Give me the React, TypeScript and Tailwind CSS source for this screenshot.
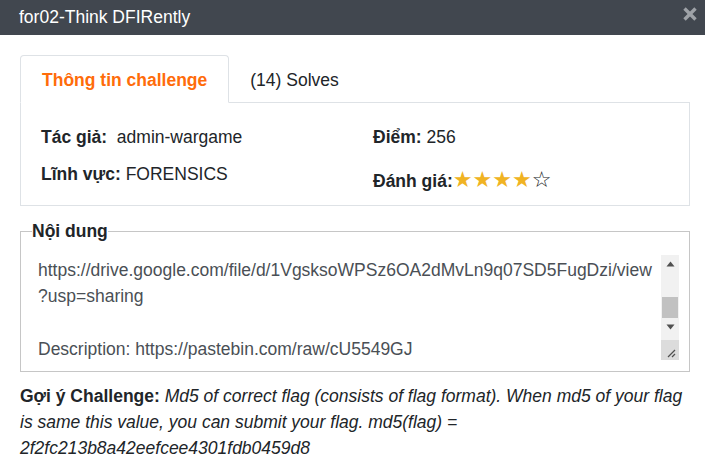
import React from "react";

function Scrollbar() {
  return (
    <div className="flex w-[18px] shrink-0 flex-col bg-[#f1f1f1]">
      <div className="flex h-[18px] items-center justify-center">
        <svg width="9" height="6" viewBox="0 0 9 6">
          <polygon points="4.5,0.5 8.5,5.5 0.5,5.5" fill="#505050" />
        </svg>
      </div>
      <div className="h-[24px]" />
      <div className="mx-[1px] h-[21px] bg-[#c1c1c1]" />
      <div className="flex h-[18px] items-center justify-center">
        <svg width="9" height="6" viewBox="0 0 9 6">
          <polygon points="0.5,0.5 8.5,0.5 4.5,5.5" fill="#505050" />
        </svg>
      </div>
      <div className="flex-1" />
      <div className="relative h-[20px] bg-[#dcdcdc]">
        <svg className="absolute bottom-[2px] right-[3px]" width="10" height="10" viewBox="0 0 10 10">
          <line x1="9" y1="2" x2="2" y2="9" stroke="#505050" strokeWidth="1.2" />
          <line x1="9" y1="6" x2="6" y2="9" stroke="#505050" strokeWidth="1.2" />
        </svg>
      </div>
    </div>
  );
}

export default function App() {
  const font = { fontFamily: '"Liberation Sans", Arial, sans-serif' };
  return (
    <div className="h-[476px] w-[705px] overflow-hidden bg-white text-[17.5px] leading-[26.4px] text-[#212529]" style={font}>
      <div className="relative flex h-[35px] items-center bg-[#41474f] pl-[19px] text-[17.5px] text-white">
        <span>for02-Think DFIRently</span>
        <svg className="absolute left-[683px] top-[7px]" width="14" height="14" viewBox="0 0 14 14">
          <line x1="1.5" y1="1.5" x2="12.5" y2="12.5" stroke="#9ea2a7" strokeWidth="3.4" />
          <line x1="12.5" y1="1.5" x2="1.5" y2="12.5" stroke="#9ea2a7" strokeWidth="3.4" />
        </svg>
      </div>

      <div className="ml-[20px] mt-[20px] w-[670px]">
        <div className="flex border-b border-[#dee2e6]">
          <div className="-mb-px rounded-t-[4px] border border-[#dee2e6] border-b-white bg-white px-[21px] pb-[9px] pt-[11px] font-bold text-[#ff6c0a]">
            Thông tin challenge
          </div>
          <div className="px-[21px] pb-[9px] pt-[12px] text-[#212529]">(14) Solves</div>
        </div>
        <div className="grid grid-cols-[332px_1fr] border-x border-b border-[#dee2e6] pb-[11px] pl-[20px] pt-[21px]">
          <div className="flex items-baseline">
            <span className="font-bold">Tác giả:</span>
            <span>{"\u00a0 admin-wargame"}</span>
          </div>
          <div className="flex items-baseline">
            <span className="font-bold">Điểm:</span>
            <span>{"\u00a0256"}</span>
          </div>
          <div className="mt-[10px] flex items-baseline">
            <span className="font-bold">Lĩnh vực:</span>
            <span>{"\u00a0FORENSICS"}</span>
          </div>
          <div className="mt-[16px] flex items-baseline">
            <span className="font-bold">Đánh giá:</span>
            <span className="text-[22px] leading-[1.2] text-[#f0b323]" style={{ fontFamily: '"DejaVu Sans", sans-serif' }}>
              ★★★★<span className="text-[#212529]">☆</span>
            </span>
          </div>
        </div>

        <fieldset className="mt-[12px] border border-[#c6c6c6] px-[10px] pb-[11px]">
          <legend className="ml-[1px] font-bold">Nội dung</legend>
          <div className="mt-[10px] flex h-[105px]">
            <div className="flex-1 overflow-hidden pl-[7px] pt-[2px] text-[#4a4f55]">
              <div>https://drive.google.com/file/d/1VgsksoWPSz6OA2dMvLn9q07SD5FugDzi/view</div>
              <div>?usp=sharing</div>
              <div>&nbsp;</div>
              <div>Description: https://pastebin.com/raw/cU5549GJ</div>
            </div>
            <Scrollbar />
          </div>
        </fieldset>

        <p className="mt-[11px] leading-[26px]">
          <span className="font-bold">Gợi ý Challenge:</span>{" "}
          <em>
            Md5 of correct flag (consists of flag format). When md5 of your flag is same this value, you can submit your flag. md5(flag) = 2f2fc213b8a42eefcee4301fdb0459d8
          </em>
        </p>
      </div>
    </div>
  );
}
